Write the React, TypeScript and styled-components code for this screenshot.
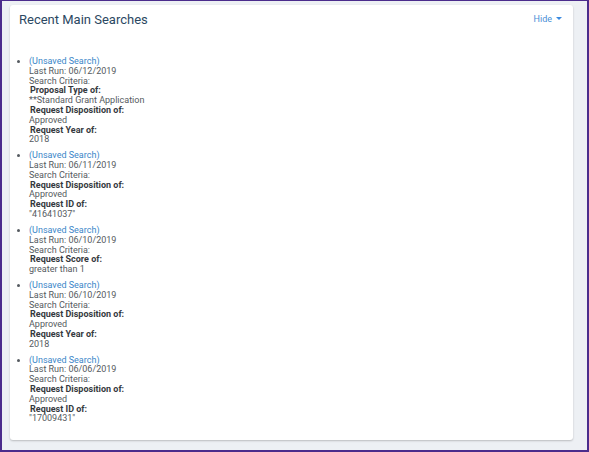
import React from 'react';
import styled, { createGlobalStyle } from 'styled-components';

const GlobalStyle = createGlobalStyle`
  html, body {
    margin: 0;
    padding: 0;
    background: #edf0f4;
  }
  body {
    font-family: Roboto, "Liberation Sans", Arial, sans-serif;
  }
`;

const Frame = styled.div`
  box-sizing: border-box;
  width: 589px;
  height: 452px;
  border: 2px solid #4b2c8c;
  border-top-width: 1px;
  background: #edf0f4;
  padding: 4px 14px 0 8px;
  overflow: hidden;
`;

const Card = styled.section`
  background: #ffffff;
  border-radius: 3px;
  box-shadow: 0 1px 2px rgba(0, 0, 0, 0.22);
  height: 435px;
  box-sizing: border-box;
  padding: 7px 11px 0 9px;
`;

const Header = styled.header`
  display: flex;
  align-items: center;
  justify-content: space-between;
  height: 16px;
`;

const Title = styled.h2`
  margin: 0;
  font-size: 13px;
  font-weight: 400;
  line-height: 16px;
  color: #2b4862;
`;

const Toggle = styled.a`
  display: flex;
  align-items: center;
  gap: 4px;
  font-size: 9px;
  color: #4a8fd6;
  text-decoration: none;
  cursor: pointer;
  margin-top: -3px;
`;

const Caret = styled.span`
  width: 0;
  height: 0;
  border-left: 3px solid transparent;
  border-right: 3px solid transparent;
  border-top: 3px solid #3a8ae0;
`;

const List = styled.ul`
  margin: 29px 0 0;
  padding-left: 10px;
  font-size: 9px;
  line-height: 9.8px;
  color: #555a60;
`;

const Item = styled.li`
  & + & {
    margin-top: 6.1px;
  }
`;

const SearchLink = styled.a`
  display: block;
  color: #3b86c8;
  text-decoration: none;
  cursor: pointer;
`;

const Line = styled.div<{ $label?: boolean }>`
  font-weight: ${(p) => (p.$label ? 700 : 400)};
  color: ${(p) => (p.$label ? '#35393e' : '#555a60')};
  padding-left: ${(p) => (p.$label ? '1px' : '0')};
`;

type Criterion = { label: string; value: string };

type Search = { lastRun: string; criteria: Criterion[] };

const searches: Search[] = [
  {
    lastRun: '06/12/2019',
    criteria: [
      { label: 'Proposal Type of:', value: '**Standard Grant Application' },
      { label: 'Request Disposition of:', value: 'Approved' },
      { label: 'Request Year of:', value: '2018' },
    ],
  },
  {
    lastRun: '06/11/2019',
    criteria: [
      { label: 'Request Disposition of:', value: 'Approved' },
      { label: 'Request ID of:', value: '"41641037"' },
    ],
  },
  {
    lastRun: '06/10/2019',
    criteria: [{ label: 'Request Score of:', value: 'greater than 1' }],
  },
  {
    lastRun: '06/10/2019',
    criteria: [
      { label: 'Request Disposition of:', value: 'Approved' },
      { label: 'Request Year of:', value: '2018' },
    ],
  },
  {
    lastRun: '06/06/2019',
    criteria: [
      { label: 'Request Disposition of:', value: 'Approved' },
      { label: 'Request ID of:', value: '"17009431"' },
    ],
  },
];

export default function App() {
  return (
    <>
      <GlobalStyle />
      <Frame>
        <Card>
          <Header>
            <Title>Recent Main Searches</Title>
            <Toggle>
              Hide
              <Caret />
            </Toggle>
          </Header>
          <List>
            {searches.map((s, i) => (
              <Item key={i}>
                <SearchLink>(Unsaved Search)</SearchLink>
                <Line>Last Run: {s.lastRun}</Line>
                <Line>Search Criteria:</Line>
                {s.criteria.map((c) => (
                  <React.Fragment key={c.label}>
                    <Line $label>{c.label}</Line>
                    <Line>{c.value}</Line>
                  </React.Fragment>
                ))}
              </Item>
            ))}
          </List>
        </Card>
      </Frame>
    </>
  );
}
